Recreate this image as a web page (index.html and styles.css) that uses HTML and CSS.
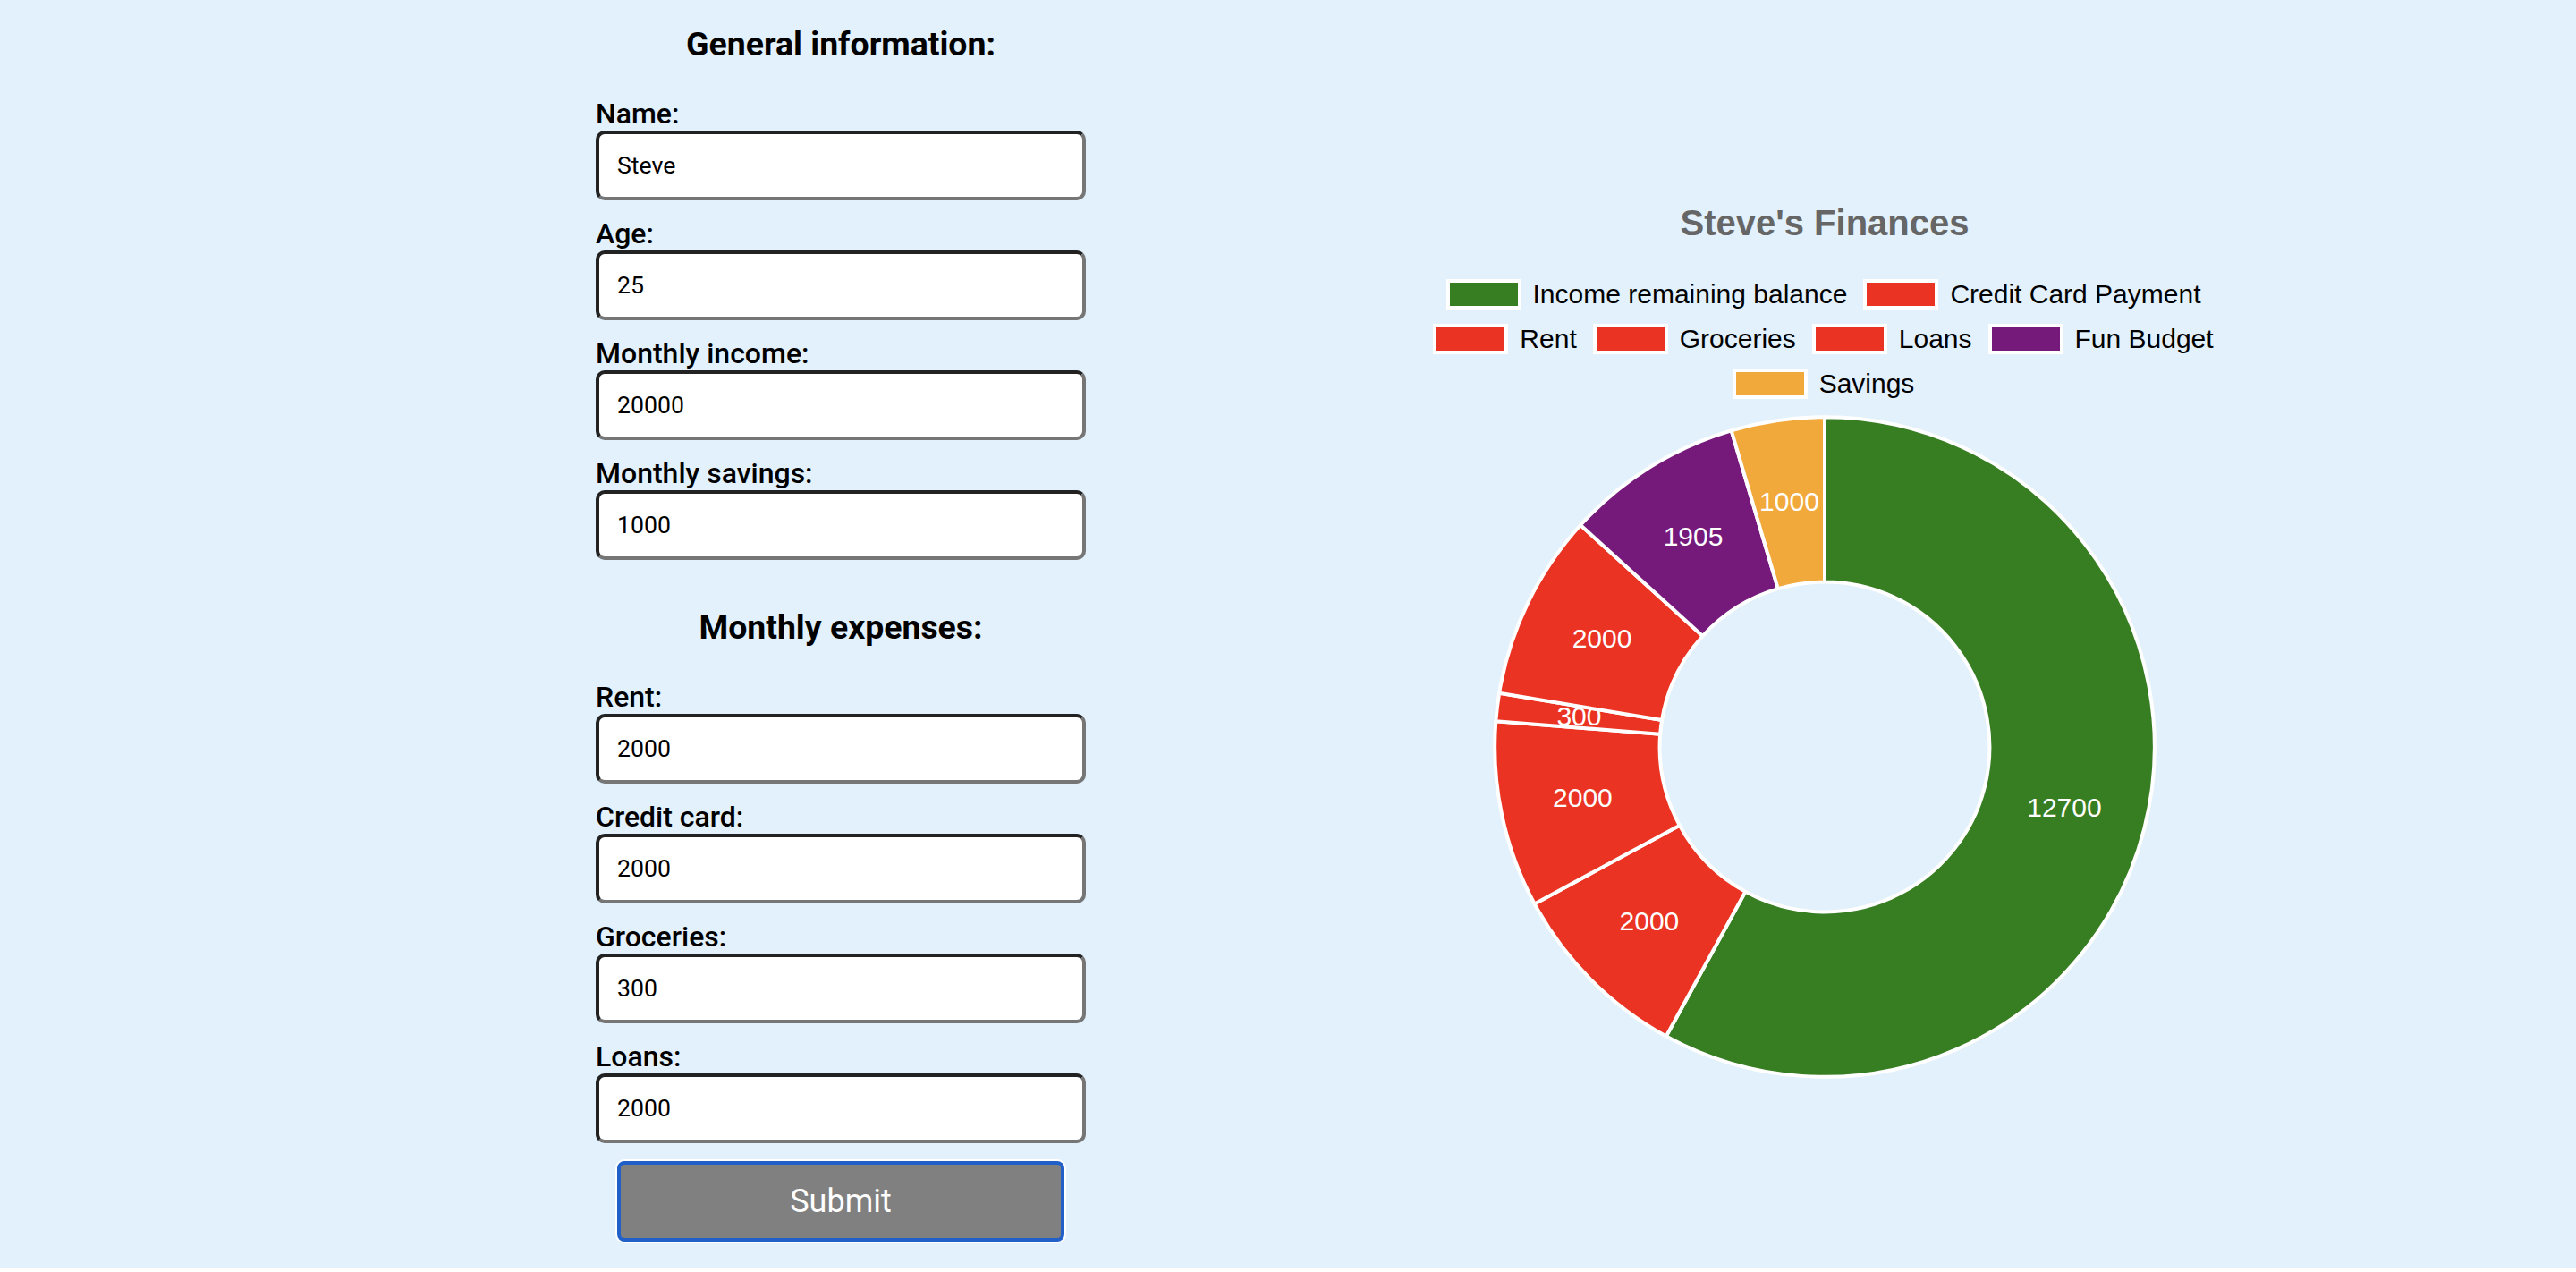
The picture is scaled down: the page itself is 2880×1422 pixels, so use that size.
FILE: index.html
```
<!DOCTYPE html>
<html lang="en">
<head>
    <meta charset="UTF-8">
    <meta name="viewport" content="width=device-width, initial-scale=1.0">
    <title>Steve's Finances</title>
    <link rel="stylesheet" href="styles.css">
</head>
<body>
    <div class="container">
        <form id="financeForm" class="finance-form">
            <h3>General information:</h3>

            <label for="name">Name:</label>
            <input type="text" id="name" value="Steve">

            <label for="age">Age:</label>
            <input type="text" id="age" value="25">

            <label for="income">Monthly income:</label>
            <input type="text" id="income" value="20000">

            <label for="savings">Monthly savings:</label>
            <input type="text" id="savings" value="1000">

            <h3 class="expenses-title">Monthly expenses:</h3>

            <label for="rent">Rent:</label>
            <input type="text" id="rent" value="2000">

            <label for="creditCard">Credit card:</label>
            <input type="text" id="creditCard" value="2000">

            <label for="groceries">Groceries:</label>
            <input type="text" id="groceries" value="300">

            <label for="loans">Loans:</label>
            <input type="text" id="loans" value="2000">

            <button type="submit" class="submit-btn">Submit</button>
        </form>

        <div class="chart">
            <h2 class="chart-title">Steve's Finances</h2>
            <ul class="legend">
                <li><span class="box green"></span>Income remaining balance</li>
                <li><span class="box red"></span>Credit Card Payment</li>
                <li><span class="box red"></span>Rent</li>
                <li><span class="box red"></span>Groceries</li>
                <li><span class="box red"></span>Loans</li>
                <li><span class="box purple"></span>Fun Budget</li>
                <li><span class="box orange"></span>Savings</li>
            </ul>
            <svg id="doughnut" class="doughnut" viewBox="-371 -371 742 742"></svg>
        </div>
    </div>

    <script>
        const slices = [
            { value: 12700, color: "green" },
            { value: 2000, color: "red" },
            { value: 2000, color: "red" },
            { value: 300, color: "red" },
            { value: 2000, color: "red" },
            { value: 1905, color: "purple" },
            { value: 1000, color: "orange" }
        ];
        const outer = 368.8;
        const inner = 184.4;

        function point(radius, angle) {
            return (radius * Math.sin(angle)).toFixed(2) + " " + (-radius * Math.cos(angle)).toFixed(2);
        }

        function drawChart() {
            let total = slices.reduce((sum, slice) => sum + slice.value, 0);
            let start = 0;
            let paths = "";
            let labels = "";

            slices.forEach((slice) => {
                let end = start + slice.value / total * Math.PI * 2;
                let mid = (start + end) / 2;
                let large = end - start > Math.PI ? 1 : 0;
                let radius = (outer + inner) / 2;

                paths += `<path class="slice ${slice.color}" d="M${point(outer, start)} A${outer} ${outer} 0 ${large} 1 ${point(outer, end)} L${point(inner, end)} A${inner} ${inner} 0 ${large} 0 ${point(inner, start)} Z"/>`;
                labels += `<text x="${radius * Math.sin(mid)}" y="${-radius * Math.cos(mid) + 9.5}">${slice.value}</text>`;
                start = end;
            });

            // Labels go last so the slice borders stay behind them
            document.getElementById("doughnut").innerHTML = paths + labels;
        }

        document.getElementById("financeForm").addEventListener("submit", function (event) {
            event.preventDefault();
        });

        drawChart();
    </script>
</body>
</html>
```
FILE: styles.css
```
* {
    box-sizing: border-box;
}

body {
    margin: 0;
    background: white;
    font-family: Roboto, sans-serif;
    font-size: 32px;
    color: black;
}

.container {
    display: flex;
    height: 1418px;
    padding-left: 666px;
    background-color: #e2f1fc;
}

.finance-form {
    display: flex;
    flex-direction: column;
    width: 548px;
    padding-top: 27px;
}

h3 {
    margin: 0 0 37px;
    font-size: 37.44px;
    line-height: 44px;
    font-weight: 700;
    text-align: center;
}

.expenses-title {
    margin: 35px 0 37px;
}

label {
    font-weight: 500;
    line-height: 38px;
}

input {
    height: 78px;
    margin: 0 0 18px;
    padding: 2px 20px;
    border: 4px solid;
    border-color: #222 #767676 #767676 #222;
    border-radius: 10px;
    background: white;
    color: black;
    font-family: Roboto, sans-serif;
    font-size: 26.67px;
}

.submit-btn {
    align-self: center;
    width: 500px;
    height: 90px;
    margin-top: 2px;
    border: 4px solid #2060c8;
    border-radius: 8px;
    box-shadow: 0 0 0 2px white;
    background: gray;
    color: white;
    font-family: Roboto, sans-serif;
    font-size: 36px;
    cursor: pointer;
}

.chart {
    display: flex;
    flex-direction: column;
    align-items: center;
    width: 908px;
    margin-left: 372px;
    padding-top: 225px;
    font-family: "Liberation Sans", Arial, sans-serif;
}

.chart-title {
    margin: 0;
    font-size: 40px;
    line-height: 48px;
    color: #666;
}

.legend {
    display: flex;
    flex-wrap: wrap;
    justify-content: center;
    gap: 16px 18px;
    margin: 39px 0 18px;
    padding: 0 3px 0 0;
    list-style-type: none;
    font-size: 30px;
    line-height: 34px;
}

.legend li {
    display: flex;
    gap: 13px;
}

.box {
    width: 84px;
    height: 34px;
    border: 4px solid white;
}

.green {
    background: #377e22;
    fill: #377e22;
}

.red {
    background: #ea3323;
    fill: #ea3323;
}

.purple {
    background: #75197b;
    fill: #75197b;
}

.orange {
    background: #f2a93b;
    fill: #f2a93b;
}

.doughnut {
    width: 742px;
    height: 742px;
}

.slice {
    stroke: white;
    stroke-width: 4px;
    stroke-linejoin: bevel;
}

.doughnut text {
    fill: white;
    font-size: 30px;
    text-anchor: middle;
}
```
